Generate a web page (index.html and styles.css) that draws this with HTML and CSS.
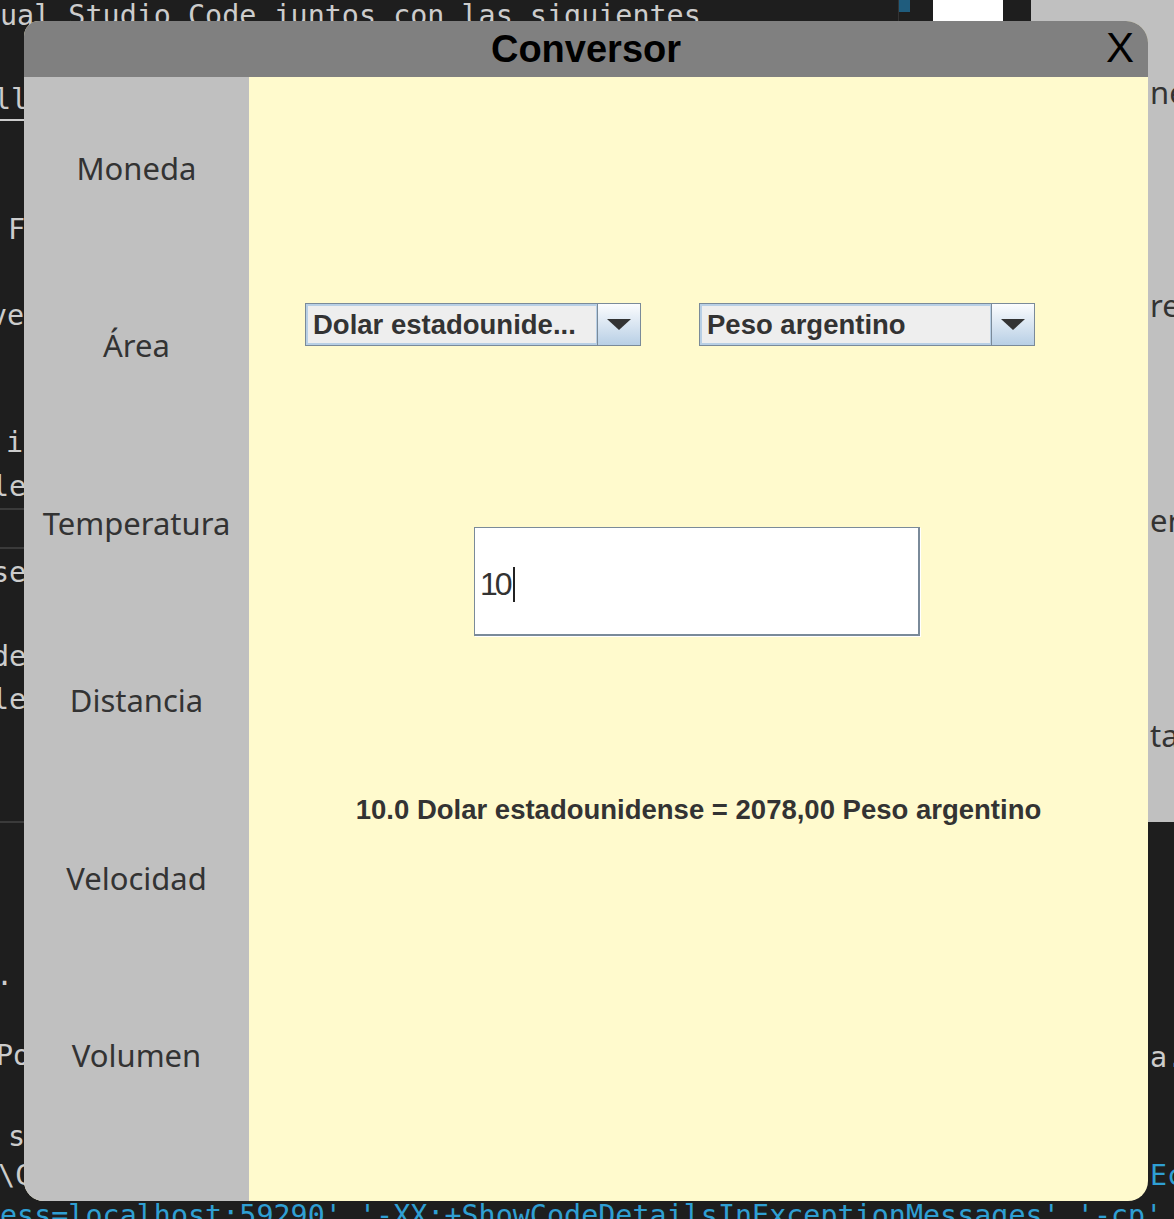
FILE: index.html
```html
<!DOCTYPE html>
<html lang="es">
<head>
<meta charset="utf-8">
<title>Conversor</title>
<link rel="stylesheet" href="styles.css">
</head>
<body>
<div class="desktop">
  <div class="bg-panel"></div>
  <div class="bg-white"></div>
  <div class="bg-blue"></div>
  <div class="bg-vline"></div>

  <div class="frag mono top-line">ual Studio Code juntos con las siguientes</div>
  <div class="frag mono" style="left:-6px;top:86px">ll</div>
  <div class="frag-rule" style="top:119px"></div>
  <div class="frag mono" style="left:8px;top:216px">F</div>
  <div class="frag mono" style="left:-10px;top:302px">ve</div>
  <div class="frag mono" style="left:6px;top:429px">i</div>
  <div class="frag mono" style="left:-8px;top:473px">le</div>
  <div class="frag-sep" style="top:508px"></div>
  <div class="frag-sep" style="top:547px"></div>
  <div class="frag mono" style="left:-8px;top:559px">se</div>
  <div class="frag mono" style="left:-8px;top:643px">de</div>
  <div class="frag mono" style="left:-8px;top:686px">le</div>
  <div class="frag-sep" style="top:821px"></div>
  <div class="frag mono" style="left:-4px;top:962px">.</div>
  <div class="frag mono" style="left:-4px;top:1042px">Po</div>
  <div class="frag mono" style="left:8px;top:1123px">s</div>
  <div class="frag mono" style="left:-2px;top:1162px">\C</div>
  <div class="frag mono blue bottom-line">ess=localhost:59290' '-XX:+ShowCodeDetailsInExceptionMessages' '-cp' '</div>

  <div class="frag side" style="left:1150px;top:72px">ne</div>
  <div class="frag side" style="left:1150px;top:285px">re</div>
  <div class="frag side" style="left:1150px;top:500px">er</div>
  <div class="frag side" style="left:1150px;top:715px">ta</div>
  <div class="frag mono" style="left:1150px;top:1044px">a.</div>
  <div class="frag mono blue" style="left:1150px;top:1162px">Ec</div>

  <div class="window">
    <div class="titlebar">
      <span class="title">Conversor</span>
      <span class="close">X</span>
    </div>
    <div class="main">
      <nav class="sidebar">
        <div class="side-item">Moneda</div>
        <div class="side-item">Área</div>
        <div class="side-item">Temperatura</div>
        <div class="side-item">Distancia</div>
        <div class="side-item">Velocidad</div>
        <div class="side-item">Volumen</div>
      </nav>
      <section class="content">
        <div class="combos">
          <div class="combo">
            <div class="combo-value">Dolar estadounide...</div>
            <div class="combo-btn">
              <svg width="24" height="11" viewBox="0 0 24 11"><polygon points="0,0 24,0 12,11" fill="#333"/></svg>
            </div>
          </div>
          <div class="combo">
            <div class="combo-value">Peso argentino</div>
            <div class="combo-btn">
              <svg width="24" height="11" viewBox="0 0 24 11"><polygon points="0,0 24,0 12,11" fill="#333"/></svg>
            </div>
          </div>
        </div>
        <div class="field"><span class="field-text">10</span><span class="caret"></span></div>
        <p class="result">10.0 Dolar estadounidense = 2078,00 Peso argentino</p>
      </section>
    </div>
  </div>
</div>
</body>
</html>
```
FILE: styles.css
```css
html, body {
  margin: 0;
  padding: 0;
  background: #1e1e1e;
}
.desktop {
  position: relative;
  width: 1174px;
  height: 1219px;
  overflow: hidden;
  background: #1e1e1e;
}
.bg-panel {
  position: absolute;
  left: 1031px;
  top: 0;
  width: 143px;
  height: 822px;
  background: #c0c0c0;
}
.bg-white {
  position: absolute;
  left: 933px;
  top: 0;
  width: 70px;
  height: 21px;
  background: #ffffff;
}
.bg-blue {
  position: absolute;
  left: 899px;
  top: 0;
  width: 11px;
  height: 12px;
  background: #1f5c7d;
}
.bg-vline {
  position: absolute;
  left: 898px;
  top: 0;
  width: 1px;
  height: 21px;
  background: #333;
}
.frag {
  position: absolute;
  white-space: nowrap;
  line-height: 28px;
}
.mono {
  font-family: "DejaVu Sans Mono", "Liberation Mono", monospace;
  font-size: 28.4px;
  color: #cccccc;
}
.blue {
  color: #2f9fd3;
}
.side {
  font-family: "Noto Sans", "DejaVu Sans", sans-serif;
  font-size: 31px;
  line-height: 40px;
  color: #333;
}
.top-line {
  left: 0;
  top: 2px;
}
.bottom-line {
  left: 0;
  top: 1202px;
}
.frag-rule {
  position: absolute;
  left: 0;
  width: 24px;
  height: 2px;
  background: #cccccc;
}
.frag-sep {
  position: absolute;
  left: 0;
  width: 24px;
  height: 2px;
  background: #3a3a3a;
}

.window {
  position: absolute;
  left: 24px;
  top: 21px;
  width: 1124px;
  height: 1180px;
  border-radius: 15px 22px 20px 20px;
  overflow: hidden;
  display: flex;
  flex-direction: column;
  background: #fffacd;
}
.titlebar {
  position: relative;
  height: 56px;
  flex: none;
  background: #808080;
  text-align: center;
}
.title {
  font-family: "Liberation Sans", Arial, sans-serif;
  font-weight: 700;
  font-size: 38px;
  line-height: 56px;
  color: #000;
}
.close {
  position: absolute;
  right: 14px;
  top: 0;
  font-family: "Liberation Sans", Arial, sans-serif;
  font-size: 42px;
  line-height: 54px;
  color: #000;
}
.main {
  flex: 1;
  display: flex;
}
.sidebar {
  width: 225px;
  flex: none;
  background: #c0c0c0;
  display: flex;
  flex-direction: column;
  padding-top: 2px;
}
.side-item {
  height: 177.5px;
  display: flex;
  align-items: center;
  justify-content: center;
  font-family: "Noto Sans", "DejaVu Sans", sans-serif;
  font-size: 31px;
  color: #333;
}
.content {
  flex: 1;
  display: flex;
  flex-direction: column;
  padding-top: 226px;
}
.combos {
  display: flex;
  gap: 58px;
  padding-left: 56px;
}
.combo {
  width: 336px;
  height: 43px;
  box-sizing: border-box;
  border: 1px solid #7a8a99;
  display: flex;
  background: #eeeeee;
}
.combo-value {
  flex: 1;
  box-sizing: border-box;
  border: 2px solid #b8cfe5;
  border-right-width: 1px;
  background: #eeeeee;
  font-family: "Liberation Sans", Arial, sans-serif;
  font-weight: 700;
  font-size: 27.5px;
  line-height: 37px;
  color: #333;
  padding-left: 5px;
  white-space: nowrap;
  overflow: hidden;
}
.combo-btn {
  width: 43px;
  flex: none;
  box-sizing: border-box;
  border-left: 1px solid #7a8a99;
  background: linear-gradient(#fbfcfe, #b8cfe5);
  display: flex;
  align-items: center;
  justify-content: center;
}
.field {
  margin-top: 181px;
  margin-left: 225px;
  width: 446px;
  height: 109px;
  box-sizing: border-box;
  background: #ffffff;
  border-top: 1px solid #7a8a99;
  border-left: 1px solid #7a8a99;
  border-right: 2px solid #7a8a99;
  border-bottom: 2px solid #7a8a99;
  box-shadow: 1px 1px 0 #ffffff;
  display: flex;
  align-items: center;
  padding-left: 5px;
  padding-top: 6px;
}
.field-text {
  font-family: "Liberation Sans", Arial, sans-serif;
  font-size: 32px;
  letter-spacing: -3px;
  color: #333;
  line-height: 36px;
}
.caret {
  width: 2px;
  height: 35px;
  background: #222;
  margin-left: 3px;
}
.result {
  margin: 157px 0 0;
  text-align: center;
  font-family: "Liberation Sans", Arial, sans-serif;
  font-weight: 700;
  font-size: 27.5px;
  line-height: 34px;
  color: #333;
}
```
